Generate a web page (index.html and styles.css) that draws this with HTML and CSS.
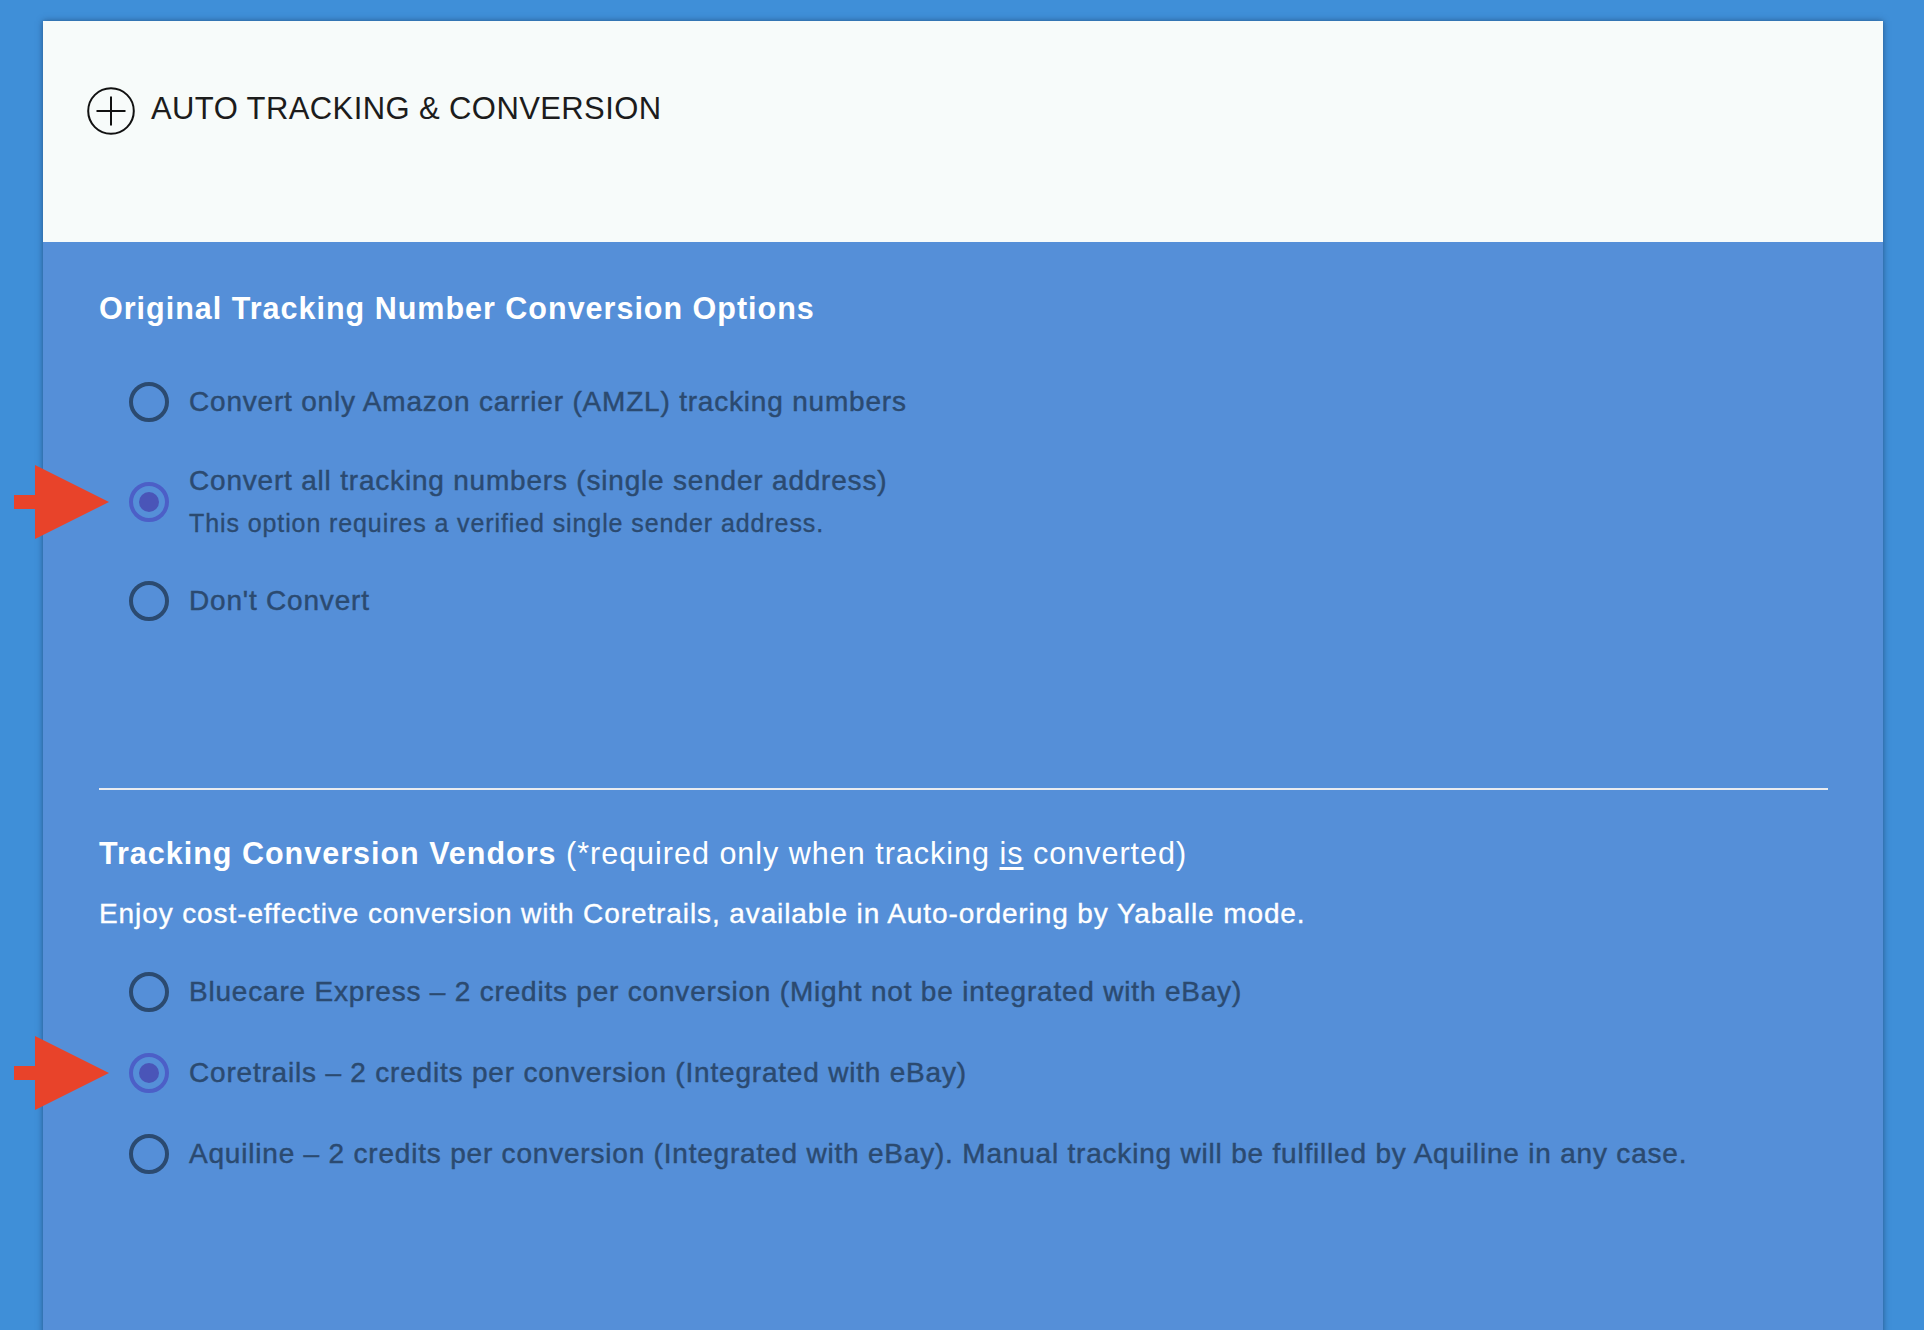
FILE: index.html
```html
<!DOCTYPE html>
<html lang="en">
<head>
<meta charset="utf-8">
<title>Auto Tracking &amp; Conversion</title>
<link rel="stylesheet" href="styles.css">
</head>
<body>
<div class="panel">
  <div class="panel-header">
    <svg class="plus-icon" viewBox="0 0 48 48" width="48" height="48" aria-hidden="true">
      <circle cx="24" cy="24" r="22.8" fill="none" stroke="#111" stroke-width="2"/>
      <path d="M9.5 24H38.5M24 9.5V38.5" stroke="#111" stroke-width="2" fill="none"/>
    </svg>
    <span class="panel-title">AUTO TRACKING &amp; CONVERSION</span>
  </div>
  <div class="panel-body">
    <h2 class="section-title">Original Tracking Number Conversion Options</h2>
    <div class="options first-options">
      <div class="option">
        <span class="radio"></span>
        <div class="option-text"><div class="option-label">Convert only Amazon carrier (AMZL) tracking numbers</div></div>
      </div>
      <div class="option">
        <span class="radio checked">
          <svg class="pointer" viewBox="0 0 95 74" width="95" height="74" aria-hidden="true"><rect x="0" y="30" width="22" height="14" fill="#e8432a"/><polygon points="21,0 95,37 21,74" fill="#e8432a"/></svg>
        </span>
        <div class="option-text">
          <div class="option-label">Convert all tracking numbers (single sender address)</div>
          <div class="option-note">This option requires a verified single sender address.</div>
        </div>
      </div>
      <div class="option">
        <span class="radio"></span>
        <div class="option-text"><div class="option-label">Don't Convert</div></div>
      </div>
    </div>
    <hr class="divider">
    <h2 class="section-title vendors-title">Tracking Conversion Vendors <span class="title-note">(*required only when tracking <u>is</u> converted)</span></h2>
    <p class="section-desc">Enjoy cost-effective conversion with Coretrails, available in Auto-ordering by Yaballe mode.</p>
    <div class="options vendor-options">
      <div class="option">
        <span class="radio"></span>
        <div class="option-text"><div class="option-label">Bluecare Express – 2 credits per conversion (Might not be integrated with eBay)</div></div>
      </div>
      <div class="option">
        <span class="radio checked">
          <svg class="pointer" viewBox="0 0 95 74" width="95" height="74" aria-hidden="true"><rect x="0" y="30" width="22" height="14" fill="#e8432a"/><polygon points="21,0 95,37 21,74" fill="#e8432a"/></svg>
        </span>
        <div class="option-text"><div class="option-label">Coretrails – 2 credits per conversion (Integrated with eBay)</div></div>
      </div>
      <div class="option">
        <span class="radio"></span>
        <div class="option-text"><div class="option-label">Aquiline – 2 credits per conversion (Integrated with eBay). Manual tracking will be fulfilled by Aquiline in any case.</div></div>
      </div>
    </div>
  </div>
</div>
</body>
</html>
```
FILE: styles.css
```css
html, body {
  margin: 0;
  padding: 0;
  height: 100%;
}
body {
  background: #3f8fd8;
  font-family: "Liberation Sans", Arial, sans-serif;
  overflow: hidden;
}
.panel {
  margin: 21px 41px 0 43px;
  background: #558fd8;
  box-shadow: 0 0 6px rgba(20, 40, 70, 0.55);
  min-height: 1400px;
}
.panel-header {
  height: 221px;
  box-sizing: border-box;
  background: #f7fbfa;
  padding: 66px 0 0 44px;
  display: flex;
  align-items: flex-start;
  gap: 16px;
}
.plus-icon {
  flex: none;
  display: block;
}
.panel-title {
  font-size: 31px;
  line-height: 44px;
  letter-spacing: 0.4px;
  color: #1c1c1c;
}
.panel-body {
  padding: 0 55px 0 56px;
  display: flex;
  flex-direction: column;
}
.section-title {
  margin: 48px 0 0;
  font-size: 30.5px;
  line-height: 36px;
  letter-spacing: 1px;
  font-weight: bold;
  color: #ffffff;
}
.vendors-title {
  margin-top: 45px;
}
.title-note {
  font-weight: normal;
}
.title-note u {
  text-underline-offset: 3px;
}
.section-desc {
  margin: 28px 0 0;
  font-size: 28px;
  line-height: 30px;
  letter-spacing: 0.9px;
  color: #ffffff;
  -webkit-text-stroke: 0.35px #ffffff;
}
.options {
  display: flex;
  flex-direction: column;
  gap: 42px;
  padding-left: 30px;
}
.first-options {
  margin-top: 56px;
}
.vendor-options {
  margin-top: 43px;
  gap: 41px;
}
.option {
  display: flex;
  align-items: center;
  gap: 20px;
}
.radio {
  position: relative;
  flex: none;
  width: 40px;
  height: 40px;
  box-sizing: border-box;
  border: 4px solid #2b4a70;
  border-radius: 50%;
}
.radio.checked {
  border-color: #4c5fc7;
}
.radio.checked::after {
  content: "";
  position: absolute;
  left: 6px;
  top: 6px;
  width: 20px;
  height: 20px;
  border-radius: 50%;
  background: #4a55b8;
}
.pointer {
  position: absolute;
  left: -119px;
  top: -21px;
  display: block;
}
.option-label {
  font-size: 28px;
  line-height: 34px;
  color: #2b4a70;
  letter-spacing: 0.8px;
  -webkit-text-stroke: 0.45px #2b4a70;
}
.option-note {
  margin-top: 9px;
  font-size: 25px;
  line-height: 32px;
  color: #2b4a70;
  letter-spacing: 0.9px;
  -webkit-text-stroke: 0.35px #2b4a70;
}
.divider {
  margin: 167px 0 0;
  border: 0;
  height: 2px;
  background: #e8ebf0;
}
```
